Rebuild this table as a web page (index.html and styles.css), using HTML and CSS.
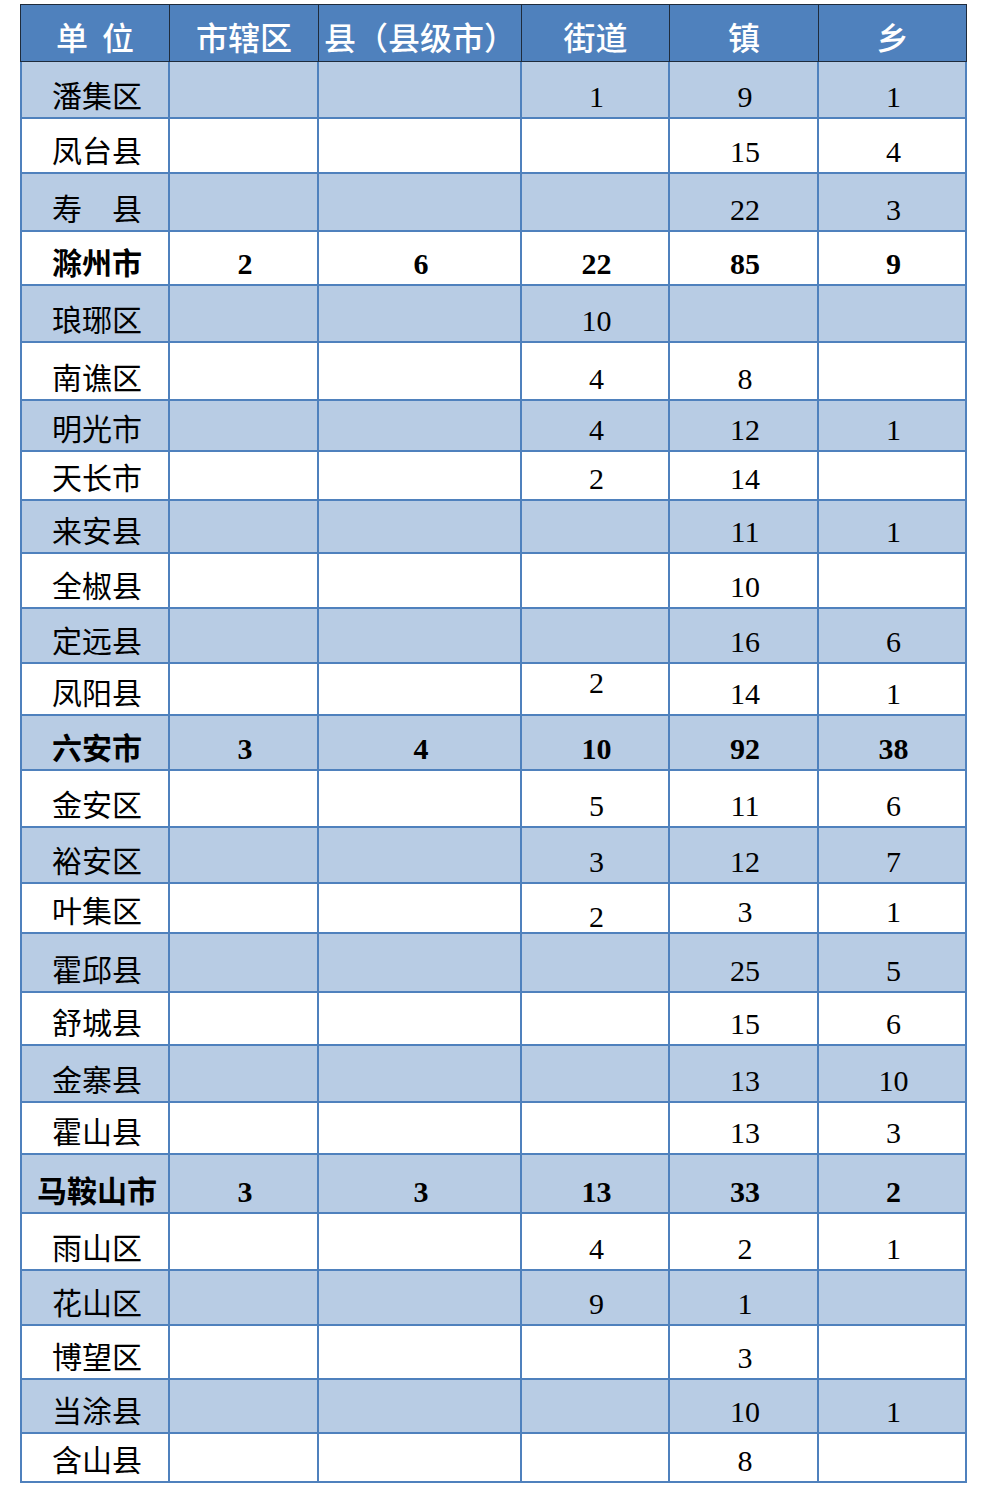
FILE: index.html
```html
<!DOCTYPE html>
<html lang="zh-CN">
<head>
<meta charset="utf-8">
<title>行政区划</title>
<link rel="stylesheet" href="styles.css">
</head>
<body>
<table class="grid">
  <colgroup>
    <col class="c1"><col class="c2"><col class="c3"><col class="c4"><col class="c5"><col class="c6">
  </colgroup>
  <thead>
    <tr class="head">
      <th class="first"><span class="sp">单 位</span></th><th>市辖区</th><th>县（县级市）</th><th>街道</th><th>镇</th><th>乡</th>
    </tr>
  </thead>
  <tbody>
    <tr class="blue h57"><td class="name">潘集区</td><td></td><td></td><td>1</td><td>9</td><td>1</td></tr>
    <tr class="white h55"><td class="name">凤台县</td><td></td><td></td><td></td><td>15</td><td>4</td></tr>
    <tr class="blue h58"><td class="name">寿　县</td><td></td><td></td><td></td><td>22</td><td>3</td></tr>
    <tr class="white h54 bold"><td class="name">滁州市</td><td>2</td><td>6</td><td>22</td><td>85</td><td>9</td></tr>
    <tr class="blue h57"><td class="name">琅琊区</td><td></td><td></td><td>10</td><td></td><td></td></tr>
    <tr class="white h58"><td class="name">南谯区</td><td></td><td></td><td>4</td><td>8</td><td></td></tr>
    <tr class="blue h51"><td class="name">明光市</td><td></td><td></td><td>4</td><td>12</td><td>1</td></tr>
    <tr class="white h49"><td class="name">天长市</td><td></td><td></td><td>2</td><td>14</td><td></td></tr>
    <tr class="blue h53"><td class="name">来安县</td><td></td><td></td><td></td><td>11</td><td>1</td></tr>
    <tr class="white h55"><td class="name">全椒县</td><td></td><td></td><td></td><td>10</td><td></td></tr>
    <tr class="blue h55"><td class="name">定远县</td><td></td><td></td><td></td><td>16</td><td>6</td></tr>
    <tr class="white h52"><td class="name">凤阳县</td><td></td><td></td><td class="raised">2</td><td>14</td><td>1</td></tr>
    <tr class="blue h55 bold"><td class="name">六安市</td><td>3</td><td>4</td><td>10</td><td>92</td><td>38</td></tr>
    <tr class="white h57"><td class="name">金安区</td><td></td><td></td><td>5</td><td>11</td><td>6</td></tr>
    <tr class="blue h56"><td class="name">裕安区</td><td></td><td></td><td>3</td><td>12</td><td>7</td></tr>
    <tr class="white h50"><td class="name">叶集区</td><td></td><td></td><td class="lowered">2</td><td>3</td><td>1</td></tr>
    <tr class="blue h59"><td class="name">霍邱县</td><td></td><td></td><td></td><td>25</td><td>5</td></tr>
    <tr class="white h53"><td class="name">舒城县</td><td></td><td></td><td></td><td>15</td><td>6</td></tr>
    <tr class="blue h57"><td class="name">金寨县</td><td></td><td></td><td></td><td>13</td><td>10</td></tr>
    <tr class="white h52"><td class="name">霍山县</td><td></td><td></td><td></td><td>13</td><td>3</td></tr>
    <tr class="blue h59 bold"><td class="name">马鞍山市</td><td>3</td><td>3</td><td>13</td><td>33</td><td>2</td></tr>
    <tr class="white h57"><td class="name">雨山区</td><td></td><td></td><td>4</td><td>2</td><td>1</td></tr>
    <tr class="blue h55"><td class="name">花山区</td><td></td><td></td><td>9</td><td>1</td><td></td></tr>
    <tr class="white h54"><td class="name">博望区</td><td></td><td></td><td></td><td>3</td><td></td></tr>
    <tr class="blue h54"><td class="name">当涂县</td><td></td><td></td><td></td><td>10</td><td>1</td></tr>
    <tr class="white h49"><td class="name">含山县</td><td></td><td></td><td></td><td>8</td><td></td></tr>
  </tbody>
</table>
</body>
</html>
```

FILE: styles.css
```css
html, body {
  margin: 0;
  padding: 0;
  background: #ffffff;
}

.grid {
  margin: 4px 0 0 20px;
  width: 947px;
  table-layout: fixed;
  border-collapse: separate;
  border-spacing: 0;
  font-family: "Liberation Serif", "Noto Sans CJK SC", serif;
  color: #000000;
}

.c1 { width: 150px; }
.c2 { width: 149px; }
.c3 { width: 203px; }
.c4 { width: 148px; }
.c5 { width: 149px; }
.c6 { width: 148px; }

.grid th,
.grid td {
  box-sizing: border-box;
  padding: 0;
  text-align: center;
  white-space: nowrap;
  overflow: hidden;
}

/* header */
.head th {
  height: 58px;
  background: #4f81bd;
  color: #ffffff;
  font-family: "Noto Sans CJK SC", sans-serif;
  font-weight: 500;
  font-size: 32px;
  line-height: 32px;
  vertical-align: middle;
  padding-top: 6px;
  border-top: 1px solid #1e2b3c;
  border-right: 1px solid #1e2b3c;
  border-bottom: 1px solid #1e2b3c;
}
.head th.first {
  border-left: 1px solid #1e2b3c;
}
.sp { word-spacing: 7px; }

/* body cells */
.grid td {
  font-size: 30px;
  line-height: 30px;
  vertical-align: bottom;
  padding-bottom: 5px;
  padding-left: 3px;
  border-right: 2px solid #4f81bd;
  border-bottom: 2px solid #4f81bd;
}
.grid td.name {
  border-left: 2px solid #4f81bd;
  padding-left: 4px;
  padding-bottom: 8px;
  font-family: "Noto Sans CJK SC", sans-serif;
}
.grid td.raised { padding-bottom: 16px; }
.grid td.lowered { padding-bottom: 0; }

.blue td { background: #b8cce4; }
.white td { background: #ffffff; }
.bold td { font-weight: bold; }

.h49 { height: 49px; }
.h50 { height: 50px; }
.h51 { height: 51px; }
.h52 { height: 52px; }
.h53 { height: 53px; }
.h54 { height: 54px; }
.h55 { height: 55px; }
.h56 { height: 56px; }
.h57 { height: 57px; }
.h58 { height: 58px; }
.h59 { height: 59px; }
```
